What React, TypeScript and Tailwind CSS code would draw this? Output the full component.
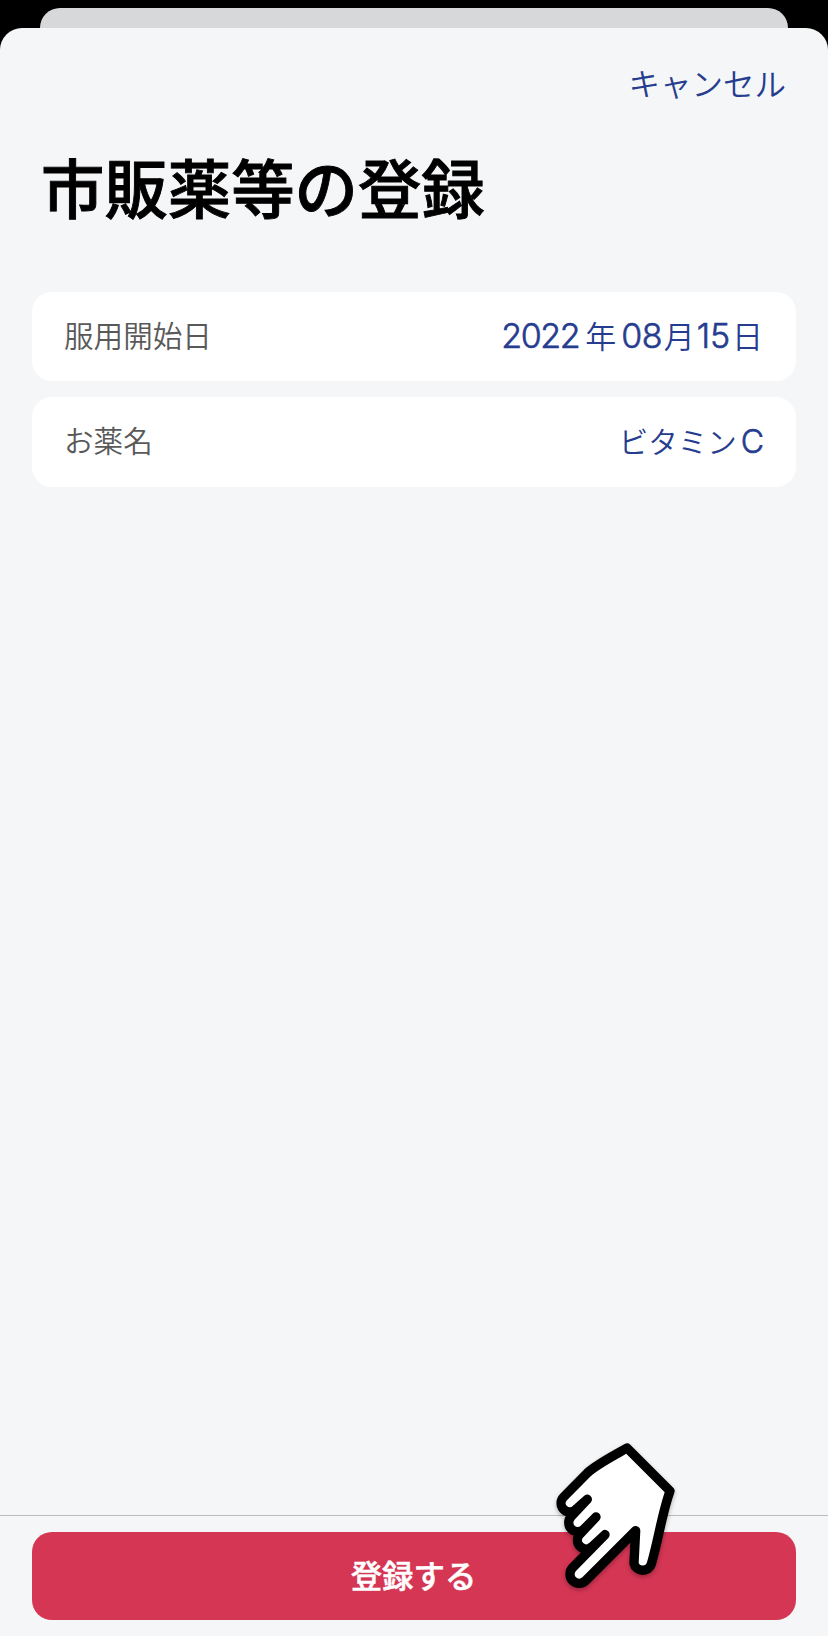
interface Part {
  text: string;
  style: string;
}

interface Field {
  id: string;
  label: string;
  parts: Part[];
}

const LATIN = "font-['Inter','Noto_Sans_CJK_JP',sans-serif] font-light [-webkit-text-stroke:0.6px_#263c8f]";

const FIELDS: Field[] = [
  {
    id: "start",
    label: "服用開始日",
    parts: [
      { text: "2022", style: `${LATIN} text-[34px] tracking-[-1.4px] mr-[6px]` },
      { text: "年", style: "text-[31px] mr-[5px]" },
      { text: "08", style: `${LATIN} text-[34px] tracking-[-0.6px] mr-[2px]` },
      { text: "月", style: "text-[31px] mr-[2px]" },
      { text: "15", style: `${LATIN} text-[34px] tracking-[-0.2px] mr-[2px]` },
      { text: "日", style: "text-[31px] mr-px" },
    ],
  },
  {
    id: "name",
    label: "お薬名",
    parts: [
      { text: "ビタミン", style: "text-[29.5px]" },
      { text: "C", style: `${LATIN} text-[32px] ml-[4px]` },
    ],
  },
];

function HandPointer() {
  return (
    <svg
      className="absolute left-[530px] top-[1420px] w-[170px] h-[190px] drop-shadow-[0_2px_2px_rgba(0,0,0,0.3)]"
      viewBox="0 0 510 570"
      fill="#fff"
      stroke="#000"
      strokeWidth="28"
      strokeLinecap="round"
      strokeLinejoin="round"
    >
      <path d="M291 84 L420 213 C396 280 385 360 364 432 A27 27 0 0 1 312 430 L317 332 L167 482 A27 27 0 0 1 128 443 L225 344 L187 379 A26 26 0 0 1 150 342 L198 291 L162 327 A26 26 0 0 1 124 289 L172 238 L138 268 A26 26 0 0 1 101 231 L172 159 C200 133 250 108 291 84 Z" />
    </svg>
  );
}

export default function App() {
  return (
    <div className="relative flex flex-col w-[828px] h-[1636px] bg-black pt-2 overflow-hidden font-['Noto_Sans_CJK_JP',sans-serif]">
      {/* Sheet behind */}
      <div className="h-5 mx-10 rounded-t-[20px] bg-[#d7d8d9] shrink-0" />

      <div className="flex-1 flex flex-col bg-[#f5f6f8] rounded-t-[22px]">
        {/* Header */}
        <div className="flex justify-end pr-[42px] pt-[30px]">
          <button className="h-12 text-[31.5px] leading-[48px] font-[350] text-[#263c8f]">キャンセル</button>
        </div>
        <h1 className="mt-[35px] h-[88px] pl-[41px] text-[63.4px] leading-[88px] font-medium [-webkit-text-stroke:0.9px_#000] text-black">市販薬等の登録</h1>

        {/* Fields */}
        <div className="flex flex-col gap-4 px-8 mt-[62.6px]">
          {FIELDS.map((field) => (
            <div
              key={field.id}
              className="flex items-center justify-between h-[89.5px] px-8 bg-white rounded-[20px]"
            >
              <span className="text-[29.6px] leading-[44px] pb-[3px] font-[350] text-[#595959]">{field.label}</span>
              <span className="flex items-baseline leading-[44px] pb-[2px] font-[350] text-[#263c8f]">
                {field.parts.map((part) => (
                  <span key={part.text} className={part.style}>{part.text}</span>
                ))}
              </span>
            </div>
          ))}
        </div>

        {/* Footer */}
        <div className="mt-auto h-[121px] px-8 pt-4 border-t border-[#bbbcbe]">
          <button className="w-full h-[88px] rounded-[20px] bg-[#d43654] pr-px pb-[2px] text-[31.4px] leading-[86px] font-medium [-webkit-text-stroke:0.5px_#fff] text-white">
            登録する
          </button>
        </div>
      </div>

      <HandPointer />
    </div>
  );
}
